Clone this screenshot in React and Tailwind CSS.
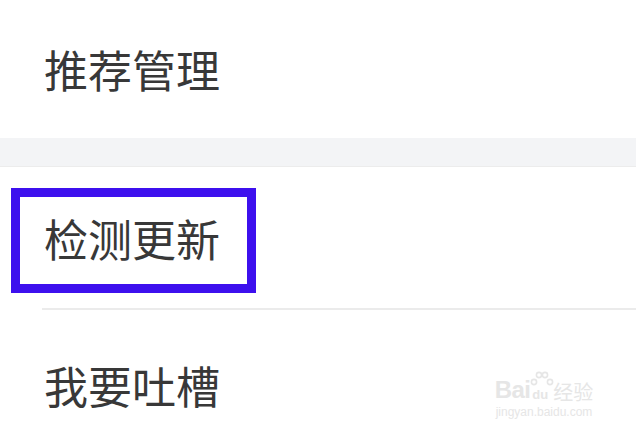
export default function App() {
  const font = "font-['Noto_Sans_CJK_SC','Noto_Sans',sans-serif]"
  return (
    <div className={`relative w-[636px] h-[448px] overflow-hidden bg-white ${font} text-[#383838]`}>
      <div className="h-[138px] flex items-center pl-[44px]">
        <span className="text-[44px] leading-none">推荐管理</span>
      </div>
      <div className="h-[29px] bg-[#f3f4f6] border-b border-[#ececec]" />
      <div className="h-[141px] flex items-center pl-[44px]">
        <span className="text-[44px] leading-none">检测更新</span>
      </div>
      <div className="ml-[42px] h-[2px] bg-[#ebebeb]" />
      <div className="h-[150px] flex items-center pl-[44px]">
        <span className="text-[44px] leading-none">我要吐槽</span>
      </div>

      {/* highlight box */}
      <div className="absolute left-[11px] top-[188px] w-[245px] h-[105px] border-[9px] border-[#3d10ee]" />

      {/* watermark */}
      <div className="absolute left-[486px] top-[378px] w-[116px] flex flex-col items-center text-[#e6e6e6] font-['Liberation_Sans',sans-serif]">
        <div className="flex items-end leading-none">
          <span className="text-[24px] font-bold tracking-tight">Bai</span>
          <span className="relative text-[13px] font-bold mx-[2px] mb-[1px]">
            <svg width="24" height="18" viewBox="0 0 24 18" className="absolute -top-[17px] -left-[2px]" fill="none" stroke="#e6e6e6" strokeWidth="1.6">
              <circle cx="4" cy="11" r="2.6" />
              <circle cx="9" cy="4" r="2.6" />
              <circle cx="15" cy="4" r="2.6" />
              <circle cx="20" cy="11" r="2.6" />
            </svg>
            du
          </span>
          <span className="text-[20px] ml-[3px] font-['Noto_Sans_CJK_SC',sans-serif]">经验</span>
        </div>
        <span className="text-[12px] mt-[4px] leading-none">jingyan.baidu.com</span>
      </div>
    </div>
  )
}
